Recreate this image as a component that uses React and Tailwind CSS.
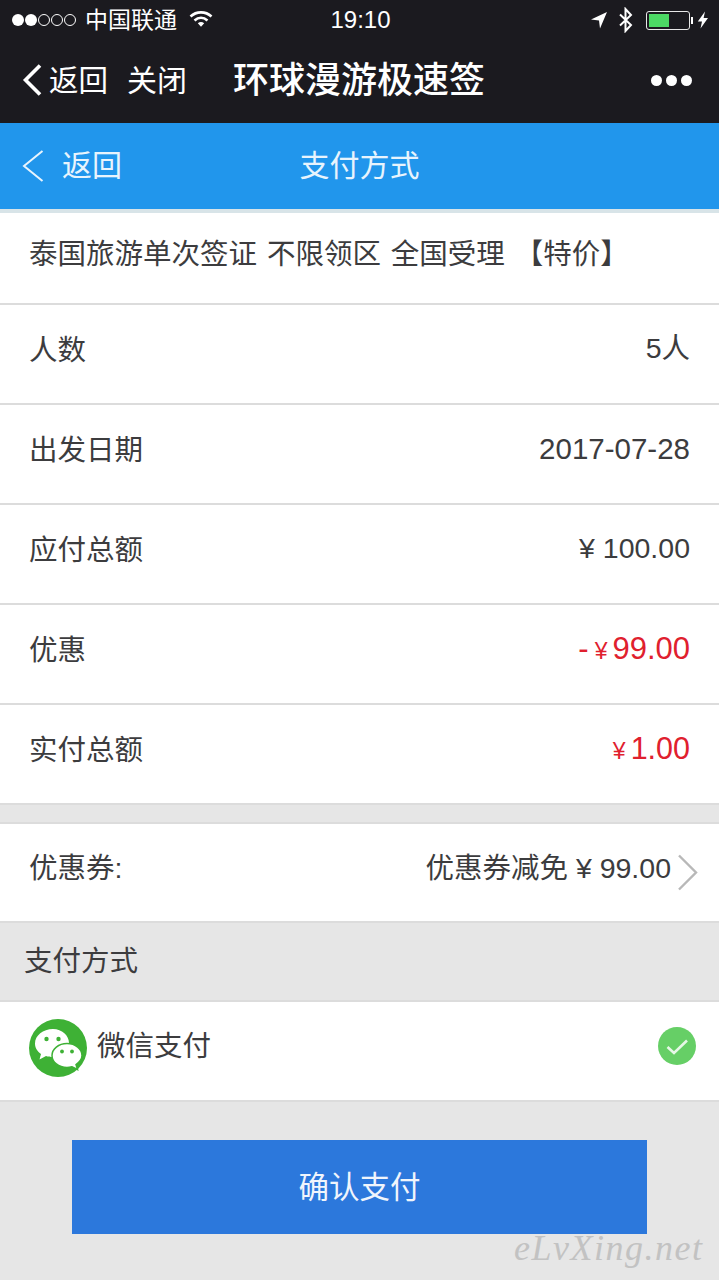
import React from "react";

const fontStack = "font-['Helvetica_Neue','Liberation_Sans','Noto_Sans_CJK_SC',sans-serif]";

const rows = [
  { label: "人数", value: "5人" },
  { label: "出发日期", value: <span className="text-[29.5px]">2017-07-28</span> },
  { label: "应付总额", value: "¥ 100.00" },
  {
    label: "优惠",
    value: (
      <span className="flex items-baseline text-[31px] text-[#e0202e]">
        <span className="mr-[6px]">-</span>
        <span className="mr-[5px] text-[23px]">¥</span>
        99.00
      </span>
    ),
  },
  {
    label: "实付总额",
    value: (
      <span className="flex items-baseline text-[30.5px] text-[#e0202e]">
        <span className="mr-[5px] text-[23px]">¥</span>
        1.00
      </span>
    ),
  },
];

const StatusBar = () => (
  <div className="flex h-[39px] items-center justify-between pl-[12px] pr-[10px] pt-[1px] text-white">
    <div className="flex w-[240px] items-center">
      <div className="flex gap-[1px]">
        <span className="h-[12px] w-[12px] rounded-full bg-white" />
        <span className="h-[12px] w-[12px] rounded-full bg-white" />
        <span className="h-[12px] w-[12px] rounded-full border border-white" />
        <span className="h-[12px] w-[12px] rounded-full border border-white" />
        <span className="h-[12px] w-[12px] rounded-full border border-white" />
      </div>
      <span className="ml-[9px] text-[23px] leading-none">中国联通</span>
      <svg className="ml-[12px] mb-[2px]" width="24" height="18" viewBox="0 0 24 18" fill="none">
        <path d="M1.5 6.5C7.5 1 16.5 1 22.5 6.5" stroke="white" strokeWidth="2.6" />
        <path d="M5.5 10.5C9.5 7 14.5 7 18.5 10.5" stroke="white" strokeWidth="2.6" />
        <path d="M8.8 13.2 12 16.8 15.2 13.2C13.2 11.6 10.8 11.6 8.8 13.2Z" fill="white" />
      </svg>
    </div>
    <span className="text-[24px] font-medium leading-none">19:10</span>
    <div className="flex w-[240px] items-center justify-end">
      <svg width="18" height="18" viewBox="0 0 18 18">
        <path d="M17 1 1 8.5 9 9.5 10 17.5Z" fill="white" />
      </svg>
      <svg className="ml-[10px]" width="16" height="26" viewBox="0 0 16 26" fill="none">
        <path d="M2 7.5 13 18 7.5 24V2L13 8 2 18.5" stroke="white" strokeWidth="2" />
      </svg>
      <div className="relative ml-[12px] h-[19px] w-[44px] rounded-[3px] border border-[#e8e8e8] p-[2px]">
        <div className="h-full w-[20px] bg-[#4cd964]" />
      </div>
      <span className="ml-[1px] h-[7px] w-[2px] bg-white" />
      <svg className="ml-[4px]" width="12" height="18" viewBox="0 0 12 18">
        <path d="M8 0.5 0.8 10.5H5L3.5 17.5 11 7H6.6Z" fill="white" />
      </svg>
    </div>
  </div>
);

const WechatNav = () => (
  <div className="flex h-[84px] items-center pl-[22px] pr-[27px] text-white">
    <svg className="mb-[2px]" width="20" height="34" viewBox="0 0 20 34" fill="none">
      <path d="M18 2.5 3.5 17 18 31.5" stroke="white" strokeWidth="3.6" />
    </svg>
    <span className="ml-[7px] text-[29.5px] leading-none">返回</span>
    <span className="ml-[19px] text-[30px] leading-none">关闭</span>
    <span className="ml-[46px] flex-1 text-[36px] font-medium leading-none">环球漫游极速签</span>
    <div className="mb-[2px] flex gap-[4px]">
      <span className="h-[11px] w-[11px] rounded-full bg-white" />
      <span className="h-[11px] w-[11px] rounded-full bg-white" />
      <span className="h-[11px] w-[11px] rounded-full bg-white" />
    </div>
  </div>
);

const BlueHeader = () => (
  <div className="relative flex h-[86px] items-center justify-center bg-[#2196ec] text-[#e8f4fd]">
    <div className="absolute left-[22px] top-[27px] flex items-center">
      <svg width="22" height="32" viewBox="0 0 22 32" fill="none">
        <path d="M20.5 1 2 16 20.5 31" stroke="#e8f4fd" strokeWidth="2" />
      </svg>
      <span className="ml-[18px] text-[30px] leading-none">返回</span>
    </div>
    <span className="text-[30px] leading-none">支付方式</span>
  </div>
);

const Row = ({ label, value }) => (
  <div className="flex h-[100px] items-center justify-between border-b-2 border-[#dcdcdc] bg-white pb-[8px] pl-[29px] pr-[29px] text-[28.5px] leading-none text-[#3c3c3e]">
    <span>{label}</span>
    <span className="mb-[3px]">{value}</span>
  </div>
);

export default function App() {
  return (
    <div className={`relative h-[1280px] w-[719px] overflow-hidden bg-[#e6e6e6] ${fontStack}`}>
      <div className="bg-[#1b1a1f]">
        <StatusBar />
        <WechatNav />
      </div>
      <BlueHeader />
      <div className="h-[4px] bg-[#d8e4e8]" />

      <div className="flex h-[92px] items-center border-b-2 border-[#dcdcdc] bg-white pb-[8px] pl-[29px] text-[28.5px] leading-none text-[#3c3c3e] [word-spacing:2px]">
        泰国旅游单次签证 不限领区 全国受理 【特价】
      </div>
      {rows.map((row) => (
        <Row key={row.label} label={row.label} value={row.value} />
      ))}

      <div className="h-[17px]" />

      <div className="flex h-[101px] items-center justify-between border-y-2 border-[#dcdcdc] bg-white pb-[8px] pl-[29px] pr-[21px] text-[28.5px] leading-none text-[#3c3c3e]">
        <span>优惠券:</span>
        <div className="flex items-center">
          <span>优惠券减免 ¥ 99.00</span>
          <svg className="ml-[6px] mt-[8px]" width="21" height="37" viewBox="0 0 21 37" fill="none">
            <path d="M2 1.5 19 18.5 2 35.5" stroke="#b8b8b8" strokeWidth="2.4" />
          </svg>
        </div>
      </div>

      <div className="flex h-[77px] items-center pl-[24px] text-[28.5px] leading-none text-[#3c3c3e]">
        支付方式
      </div>

      <div className="flex h-[102px] items-center border-y-2 border-[#dcdcdc] bg-white pb-[9px] pl-[29px] pr-[23px]">
        <svg className="mt-[2px]" width="58" height="58" viewBox="0 0 58 58">
          <circle cx="29" cy="29" r="29" fill="#3eb135" />
          <path d="M24 10C14 10 6 16.5 6 24.5 6 29 8.5 32.5 12 35L10.5 40.5 17 37C19 37.8 21.5 38.2 24 38.2 32 38.2 40 32 40 24 40 16.5 33 10 24 10Z" fill="white" />
          <circle cx="17.5" cy="20" r="2.2" fill="#3eb135" />
          <circle cx="29.5" cy="20" r="2.2" fill="#3eb135" />
          <path d="M38 24.5C29.5 24.5 23 30 23 36.5 23 43 29.5 48.5 38 48.5 39.8 48.5 41.4 48.2 43 47.8L48.5 50.5 47 45.5C50.5 43 53 40 53 36.5 53 30 46.5 24.5 38 24.5Z" fill="white" stroke="#3eb135" strokeWidth="1.5" />
          <circle cx="33" cy="32.5" r="1.9" fill="#3eb135" />
          <circle cx="43" cy="32.5" r="1.9" fill="#3eb135" />
        </svg>
        <span className="ml-[10px] flex-1 text-[28.5px] leading-none text-[#3c3c3e]">微信支付</span>
        <svg width="38" height="38" viewBox="0 0 38 38" fill="none" className="mb-[2px]">
          <circle cx="19" cy="19" r="19" fill="#66cf66" />
          <path d="M9.5 20 16 26 29 13.5" stroke="#e6f7e6" strokeWidth="2.6" />
        </svg>
      </div>

      <div className="px-[72px] pt-[38px]">
        <div className="flex h-[94px] items-center justify-center bg-[#2c78dc] text-[30.5px] leading-none text-[#f0f5fc]">
          确认支付
        </div>
      </div>

      {/* watermark over the bottom corner */}
      <span className="absolute left-[514px] top-[1230px] font-['Liberation_Serif'] text-[36px] italic leading-none tracking-[1.5px] text-[#c2c2c2]">
        eLvXing.net
      </span>
    </div>
  );
}
